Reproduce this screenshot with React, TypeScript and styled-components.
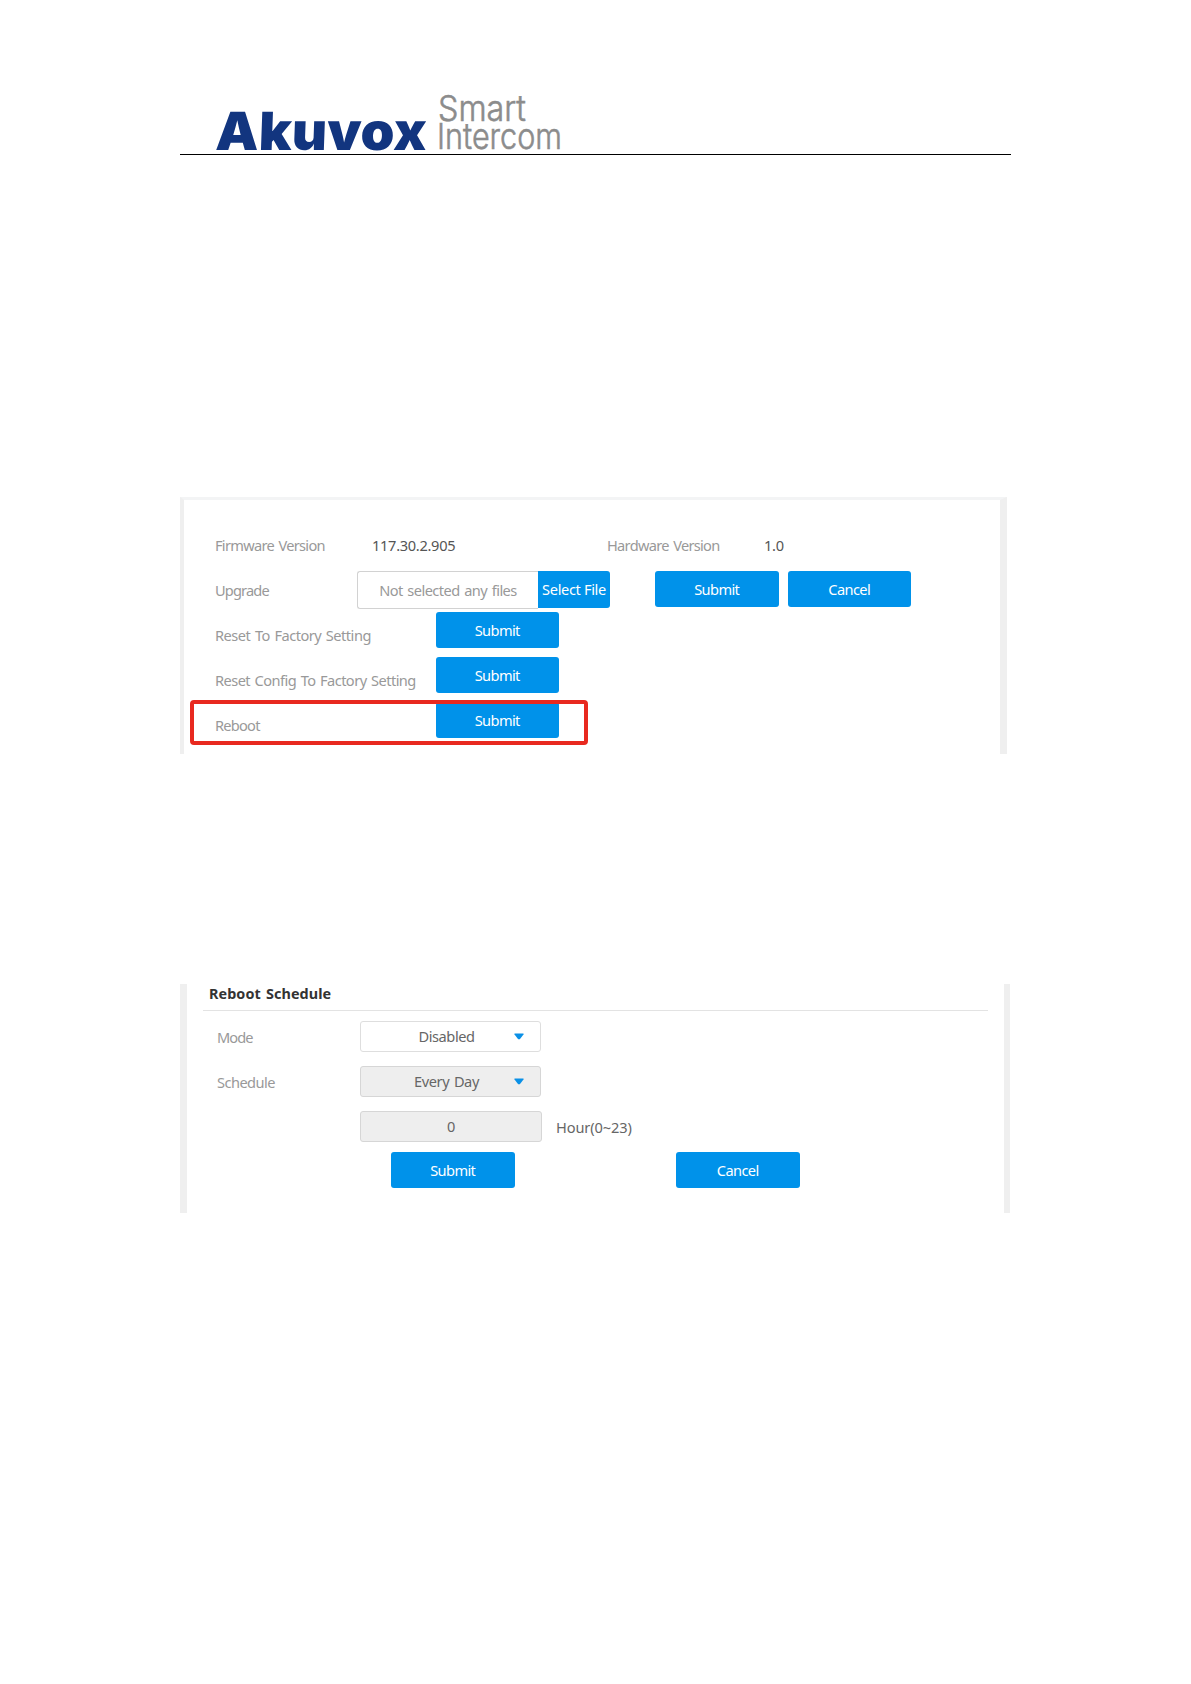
import styled, { createGlobalStyle } from "styled-components";

const GlobalStyle = createGlobalStyle`
  * {
    box-sizing: border-box;
  }

  body {
    margin: 0;
    background: #fff;
    font-family: "Noto Sans", "Open Sans", sans-serif;
    font-size: 14.6px;
    letter-spacing: -0.55px;
    word-spacing: 1.3px;
    color: #555;
  }
`;

interface IBox {
  $width: number;
}

interface IText {
  $spacing?: number;
}

const App: React.FC = () => (
  <Page>
    <GlobalStyle />
    <Header>
      <Logo />
    </Header>

    <UpgradePanel>
      <Row>
        <Label $width={157}><Text $spacing={-0.7}>Firmware Version</Text></Label>
        <Value $width={235}><Text $spacing={-0.3}>117.30.2.905</Text></Value>
        <Label $width={157}><Text $spacing={-0.7}>Hardware Version</Text></Label>
        <Value $width={60}><Text $spacing={-0.3}>1.0</Text></Value>
      </Row>
      <Row>
        <Label $width={142}><Text $spacing={-0.85}>Upgrade</Text></Label>
        <FileName>Not selected any files</FileName>
        <SelectFile type="button">Select File</SelectFile>
        <UpgradeActions>
          <Button type="button">Submit</Button>
          <Button type="button">Cancel</Button>
        </UpgradeActions>
      </Row>
      <Row>
        <Label $width={220.5}><Text $spacing={-0.5}>Reset To Factory Setting</Text></Label>
        <RaisedButton type="button">Submit</RaisedButton>
      </Row>
      <Row>
        <Label $width={220.5}><Text>Reset Config To Factory Setting</Text></Label>
        <RaisedButton type="button">Submit</RaisedButton>
      </Row>
      <Row>
        <Label $width={220.5}><Text $spacing={-0.75}>Reboot</Text></Label>
        <RaisedButton type="button">Submit</RaisedButton>
        <Highlight />
      </Row>
    </UpgradePanel>

    <SchedulePanel>
      <Title>Reboot Schedule</Title>
      <Fields>
        <Row>
          <Label $width={143}><Text $spacing={-0.9}>Mode</Text></Label>
          <Select>Disabled<Caret /></Select>
        </Row>
        <Row>
          <Label $width={143}><Text>Schedule</Text></Label>
          <Select $disabled>Every Day<Caret /></Select>
        </Row>
        <Row>
          <Label $width={143} />
          <HourField $disabled>0</HourField>
          <Hint>Hour(0~23)</Hint>
        </Row>
      </Fields>
      <ScheduleActions>
        <Button type="button">Submit</Button>
        <Button type="button">Cancel</Button>
      </ScheduleActions>
    </SchedulePanel>
  </Page>
)

export default App;

const Logo: React.FC = () => (
  <svg width="350" height="64" viewBox="0 0 350 64">
    <text
      transform="translate(-1 59.5) skewX(-2)"
      fill="#12357f"
      fontFamily="Inter"
      fontWeight="900"
      fontSize="52.5"
      letterSpacing="0"
      textLength="211"
      lengthAdjust="spacingAndGlyphs"
    >
      Akuvox
    </text>
    <g
      fill="#8c8c8c"
      stroke="#8c8c8c"
      strokeWidth="0.6"
      fontFamily="Inter"
      fontWeight="300"
      fontSize="36"
      letterSpacing="0"
    >
      <text x="222" y="30.5" textLength="88" lengthAdjust="spacingAndGlyphs">Smart</text>
      <text x="221" y="59" textLength="125" lengthAdjust="spacingAndGlyphs">Intercom</text>
    </g>
  </svg>
)

const Caret: React.FC = () => (
  <CaretIcon width="10" height="7" viewBox="0 0 10 7">
    <path d="M0.5 0.5H9.5V1.6L5.8 6.3H4.2L0.5 1.6Z" fill="#0a90e6" />
  </CaretIcon>
)

const Page = styled.div`
  width: 1191px;
  height: 1684px;
  padding: 90px 180px 0;
  overflow: hidden;
`;

const Header = styled.header`
  height: 65px;
  padding-left: 36px;
  border-bottom: 1px solid #000;

  > svg {
    display: block;
    overflow: visible;
  }
`;

const UpgradePanel = styled.section`
  width: 827px;
  height: 257px;
  margin-top: 342px;
  padding: 22px 0 0 31px;
  border: 0 solid #efefef;
  border-top: 3px solid #f3f4f5;
  border-left-width: 4px;
  border-right-width: 7px;
`;

const SchedulePanel = styled.section`
  width: 830px;
  height: 229px;
  margin-top: 230px;
  padding: 0 16px;
  border: 0 solid #efefef;
  border-left-width: 7px;
  border-right-width: 6px;
`;

const Title = styled.h2`
  height: 27px;
  margin: 0;
  padding-left: 6px;
  border-bottom: 1px solid #e3e3e3;
  font-size: 14.4px;
  font-weight: 700;
  letter-spacing: 0.08px;
  line-height: 20px;
  color: #333;
`;

const Fields = styled.div`
  padding: 3px 0 0 14px;
`;

const Row = styled.div`
  position: relative;
  display: flex;
  align-items: center;
  height: 45px;
  white-space: nowrap;
`;

const Label = styled.div<IBox>`
  flex: none;
  width: ${({ $width }) => $width}px;
  color: #999;
`;

const Value = styled(Label)`
  color: #555;
`;

const Text = styled.span<IText>`
  letter-spacing: ${({ $spacing = -0.55 }) => $spacing}px;
`;

const Button = styled.button`
  flex: none;
  width: 123.5px;
  height: 36px;
  padding: 0;
  border: 0;
  border-radius: 3px;
  background: #0092ea;
  font: inherit;
  letter-spacing: -0.6px;
  color: #fff;
`;

const RaisedButton = styled(Button)`
  margin-bottom: 10px;
`;

const FileName = styled.div`
  width: 181px;
  height: 38px;
  border: 1px solid #d2d2d2;
  border-right: 0;
  border-radius: 3px 0 0 3px;
  line-height: 36px;
  text-align: center;
  color: #999;
`;

const SelectFile = styled(Button)`
  width: 72px;
  height: 37px;
  margin-bottom: 1px;
  border-radius: 0 3px 3px 0;
  letter-spacing: -0.35px;
`;

const UpgradeActions = styled.div`
  display: flex;
  gap: 9px;
  margin: 0 0 2px 45px;
`;

const Highlight = styled.div`
  position: absolute;
  top: -2px;
  left: -25px;
  width: 398px;
  height: 44.5px;
  border: 4px solid #e8291f;
  border-radius: 4px;
`;

const Select = styled.div<{ $disabled?: boolean;}>`
  position: relative;
  width: 181px;
  height: 31px;
  padding-right: 8px;
  border: 1px solid ${({ $disabled }) => $disabled ? "#d6d6d6" : "#dedede"};
  border-radius: 3px;
  background: ${({ $disabled }) => $disabled ? "#eee" : "#fff"};
  line-height: 29px;
  letter-spacing: -0.42px;
  text-align: center;
  color: #666;
`;

const HourField = styled(Select)`
  width: 182px;
  padding: 0;
`;

const CaretIcon = styled.svg`
  position: absolute;
  top: 11px;
  right: 16px;
`;

const Hint = styled.span`
  margin-left: 14px;
  letter-spacing: -0.1px;
  color: #666;
`;

const ScheduleActions = styled.div`
  display: flex;
  gap: 161.5px;
  padding: 3px 0 0 188px;
`;
